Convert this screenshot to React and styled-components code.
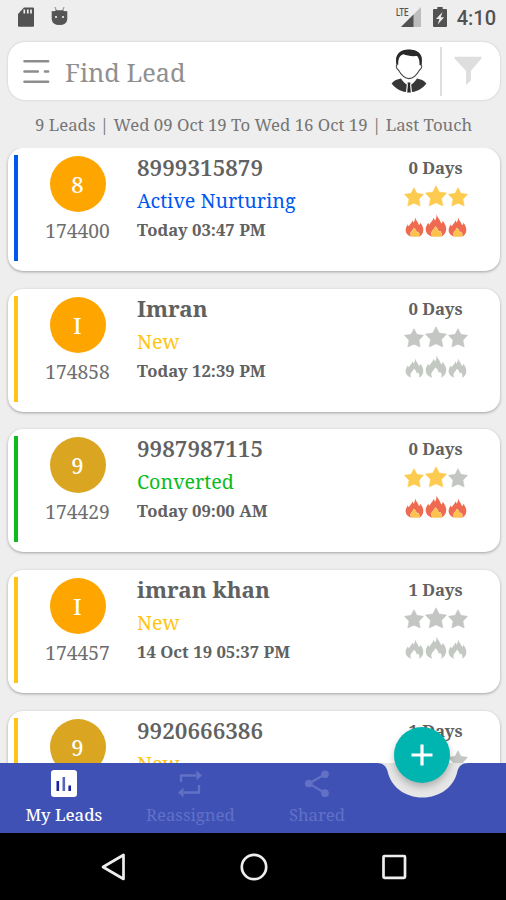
import React from "react";
import styled, { createGlobalStyle } from "styled-components";

const leads = [
  { initial: "8", id: "174400", name: "8999315879", status: "Active Nurturing", color: "#0057f0", time: "Today 03:47 PM", days: 0, stars: 3, flames: 3, avatar: "#ffa500" },
  { initial: "I", id: "174858", name: "Imran", status: "New", color: "#ffc419", time: "Today 12:39 PM", days: 0, stars: 0, flames: 0, avatar: "#ffa500" },
  { initial: "9", id: "174429", name: "9987987115", status: "Converted", color: "#0dbb1c", time: "Today 09:00 AM", days: 0, stars: 2, flames: 3, avatar: "#daa520" },
  { initial: "I", id: "174457", name: "imran khan", status: "New", color: "#ffc419", time: "14 Oct 19 05:37 PM", days: 1, stars: 0, flames: 0, avatar: "#ffa500" },
  { initial: "9", name: "9920666386", status: "New", color: "#ffc419", days: 1, stars: 0, flames: 0, avatar: "#daa520" },
];

const Star = ({ big, on }) => (
  <svg width={big ? 22 : 20} height={big ? 22 : 20} viewBox="0 0 22 22">
    <path
      d="M11 .8l3.200 6.200 7.300 1.100-5 5.300 1.300 7.500L11 17.800l-6.800 3.100 1.300-7.500-5-5.300L7.800 7z"
      fill={on ? "#fdcb50" : "#c3c6c3"}
      stroke={on ? "#fdcb50" : "#c3c6c3"}
      strokeWidth=".6"
      strokeLinejoin="round"
    />
  </svg>
);

const Flame = ({ big, on }) => (
  <svg width={big ? 22 : 19} height={big ? 23 : 20} viewBox="0 0 22 24" preserveAspectRatio="none">
    <path
      d="M11.500.3C12.500 4 15.300 6 16.200 10c.8-.6 1.400-1.700 1.500-3 2.300 2.900 3.700 6.200 3.500 9.300-.2 3.400-2 6.100-5.200 7.500 1.200-2.200 1-4.200-1-6.400-.3.600-.7 1-1.400 1.200-.1-2.400-1.300-4.300-3.400-5.800-.4 2.300-3 3.700-3.700 6-.5 1.700-.1 3.500 1 5C3.200 22.500.8 19.800.7 16c0-2.700 1.200-4.900 2.500-7 .3 1 .7 1.700 1.400 2.200C5.300 8.500 8 7.300 8.500 4.300c.8.700 1.300 1.600 1.500 2.700 1.200-1.800 1.700-4.200 1.500-6.700z"
      fill={on ? "#ee6a50" : "#c3c8c3"}
    />
    {on && (
      <path
        d="M10.200 12.800c2.100 1.500 3.300 3.400 3.400 5.800.7-.2 1.100-.6 1.400-1.200 2 2.200 2.200 4.200 1 6.400H7.500c-1.100-1.500-1.500-3.300-1-5 .7-2.300 3.300-3.700 3.700-6z"
        fill="#fcc250"
      />
    )}
  </svg>
);

const MenuIcon = () => (
  <svg width="28" height="25" viewBox="0 0 28 25" fill="none" stroke="#8d8d8d" strokeWidth="2.600" strokeLinecap="round">
    <path d="M2.500 2.200h23.600M2.500 12.500h13.300M23 12.500h3.100M2.500 22.800h23.600" />
  </svg>
);

const Person = () => (
  <svg width="36" height="44" viewBox="0 0 36 44">
    <path
      d="M5.600 12C5 5.500 10 1.200 18 1.200S31 5 30.400 12l-.4 4c1.400.6.700 3.500-1.400 5-2.600 4.500-6.200 8.600-10.600 8.600S10 25.500 7.400 21c-2.100-1.500-2.800-4.400-1.400-5z"
      fill="#fff"
      stroke="#444"
      strokeWidth="1.100"
    />
    <path d="M5.600 15.500C4.200 6 8 .6 18 .6c8 0 13.600 4 12.500 13.800l-.5 1.800-1.500-.2c.2-4-.4-6.600-2.400-9C21 7.500 15.500 6.800 12.500 5.300 8.500 6.500 7.200 9.500 7.200 15.700z" fill="#292929" />
    <path d="M10 29.500c2.200 3.500 4.300 5.200 5.800 6L15 43C9 42.200 4.200 39 .6 34.400c2.400-2.900 5.600-4.200 9.400-4.900zM26 29.500c-2.200 3.500-4.300 5.200-5.800 6L21 43c6-.8 10.800-4 14.400-8.600-2.400-2.900-5.600-4.200-9.400-4.900z" fill="#383838" />
    <path d="M16.500 33.500h3l-.4 2.500.7 7.500h-3.600l.7-7.500z" fill="#292929" />
  </svg>
);

const Funnel = () => (
  <svg width="28" height="30" viewBox="0 0 28 30">
    <path d="M.5.800h27v1.800L17 14.800v9.400L12 29V14.800L.500 2.600z" fill="#dedede" />
  </svg>
);

const StatusIcons = () => (
  <>
    <svg width="16" height="20" viewBox="0 0 16 20">
      <path d="M6 .5h9q1 0 1 1v17.200q0 1-1 1H1q-1 0-1-1V7z" fill="#525252" />
      <path d="M6.300 2.500v4M9.800 2.500v4M13 2.500v4" stroke="#eee" strokeWidth="1.700" />
    </svg>
    <svg width="17" height="20" viewBox="0 0 17 20">
      <path d="M4 0l1.500 4M13 0l-1.500 4" stroke="#9a9a9a" strokeWidth="1.200" />
      <path d="M.7 4q3 .5 4.500-.8h6.600Q13.300 4.500 16.300 4v8q-.5 6-7.800 6T.7 12z" fill="#555" />
      <circle cx="5" cy="10" r="1.100" fill="#eee" />
      <circle cx="12" cy="10" r="1.100" fill="#eee" />
    </svg>
  </>
);

const Signal = () => (
  <svg width="20" height="20" viewBox="0 0 20 20">
    <path d="M20 0v20H0z" fill="#bdbdbd" />
    <path d="M12.500 7.500V20H0z" fill="#525252" />
  </svg>
);

const Battery = () => (
  <svg width="14" height="20" viewBox="0 0 14 20">
    <path d="M4.300 0h5.400v2H13q1 0 1 1v16q0 1-1 1H1q-1 0-1-1V3q0-1 1-1h3.300z" fill="#525252" />
    <path d="M9.500 5L3 12h3.400L4.800 17.500 11 10.300H7.700z" fill="#eee" />
  </svg>
);

const ChartIcon = () => (
  <svg width="26" height="27" viewBox="0 0 26 27">
    <rect width="26" height="27" rx="3" fill="#fff" />
    <path d="M6.800 11v10" stroke="#1c1fa0" strokeWidth="2.600" />
    <path d="M12.800 7v14" stroke="#5a62bf" strokeWidth="2.600" />
    <path d="M18.700 15.500V21" stroke="#1c1fa0" strokeWidth="2.600" />
  </svg>
);

const RepeatIcon = () => (
  <svg width="26" height="27" viewBox="0 0 26 27">
    <path d="M4 12V5.500h15.500M22 15v7.500H6.500" fill="none" stroke="#6270c5" strokeWidth="2.300" />
    <path d="M19.500.5l5.500 5-5.500 5zM6.500 17.500l-5.500 5 5.500 5z" fill="#6270c5" />
  </svg>
);

const ShareIcon = () => (
  <svg width="26" height="27" viewBox="0 0 26 28" fill="#6270c5">
    <path d="M21.500 4.500L4.500 14l17 10" fill="none" stroke="#6270c5" strokeWidth="2.300" />
    <circle cx="21.300" cy="4.500" r="4" />
    <circle cx="4.500" cy="14" r="4" />
    <circle cx="21.300" cy="24" r="4" />
  </svg>
);

const App = () => {
  return (
    <Screen>
      <GlobalStyle />
      <StatusBar>
        <StatusIcons />
        <Lte>LTE</Lte>
        <Signal />
        <Battery />
        <Clock>4:10</Clock>
      </StatusBar>
      <SearchBar>
        <MenuIcon />
        <SearchText>Find Lead</SearchText>
        <Person />
        <Divider />
        <Funnel />
      </SearchBar>
      <Summary>9 Leads | Wed 09 Oct 19 To Wed 16 Oct 19 | Last Touch</Summary>
      <LeadList>
        {leads.map((lead) => (
          <Card key={lead.name}>
            <Stripe $color={lead.color} />
            <Badge>
              <Avatar $color={lead.avatar}>{lead.initial}</Avatar>
              {lead.id && <LeadId>{lead.id}</LeadId>}
            </Badge>
            <Details>
              <Name $digits={/^\d/.test(lead.name)}>{lead.name}</Name>
              <Status $color={lead.color}>{lead.status}</Status>
              {lead.time && <Time>{lead.time}</Time>}
            </Details>
            <Rating>
              <Days>{lead.days} Days</Days>
              <IconRow $height={26}>
                {[0, 1, 2].map((i) => (
                  <Star key={i} big={i === 1} on={i < lead.stars} />
                ))}
              </IconRow>
              <IconRow $height={30}>
                {[0, 1, 2].map((i) => (
                  <Flame key={i} big={i === 1} on={i < lead.flames} />
                ))}
              </IconRow>
            </Rating>
          </Card>
        ))}
      </LeadList>
      <BottomBar>
        <Tab $active>
          <ChartIcon />
          <TabLabel>My Leads</TabLabel>
        </Tab>
        <Tab>
          <RepeatIcon />
          <TabLabel>Reassigned</TabLabel>
        </Tab>
        <Tab>
          <ShareIcon />
          <TabLabel>Shared</TabLabel>
        </Tab>
        <Notch width="92" height="36" viewBox="0 0 92 36">
          <path d="M0 0C6 0 9 3 10.500 8C14 24 28 34.500 45.500 34.500S77 24 80.500 8C82 3 85 0 91 0z" fill="#e6e6e6" />
        </Notch>
        <AddButton>
          <svg width="22" height="22" viewBox="0 0 22 22">
            <path d="M11 .5v21M.5 11h21" stroke="#fff" strokeWidth="3.200" />
          </svg>
        </AddButton>
      </BottomBar>
      <SystemNav>
        <svg width="26" height="28" viewBox="0 0 26 28" fill="none" stroke="#eee" strokeWidth="2.700" strokeLinejoin="round">
          <path d="M22.500 2v24L2 14z" />
        </svg>
        <svg width="28" height="28" viewBox="0 0 28 28" fill="none" stroke="#eee" strokeWidth="2.700">
          <circle cx="14" cy="14" r="12.200" />
        </svg>
        <svg width="26" height="28" viewBox="0 0 26 28" fill="none" stroke="#eee" strokeWidth="2.700">
          <rect x="2.500" y="3" width="21.500" height="21.800" rx="1" />
        </svg>
      </SystemNav>
    </Screen>
  );
};

export default App;

const GlobalStyle = createGlobalStyle`
  * {
    box-sizing: border-box;
  }
  body {
    margin: 0;
    overflow: hidden;
  }
  svg {
    display: block;
    flex: none;
  }
`;

const Screen = styled.div`
  display: flex;
  flex-direction: column;
  width: 506px;
  height: 900px;
  overflow: hidden;
  background: #eeeeee;
  color: #616161;
  font-family: "Noto Serif", "DejaVu Serif", serif;
  white-space: nowrap;
`;

const StatusBar = styled.div`
  display: flex;
  align-items: flex-start;
  gap: 12px;
  height: 42px;
  padding: 7px 10px 0 18px;

  svg:nth-child(2) {
    margin-left: 5px;
  }
`;

const Lte = styled.span`
  z-index: 1;
  margin: 0 -21px 0 auto;
  font: 500 11px/11px Roboto, sans-serif;
  color: #525252;
  transform: scaleX(0.72);
  transform-origin: 80% 50%;
`;

const Clock = styled.span`
  margin-left: -2px;
  font: 500 20px/22px Roboto, sans-serif;
  color: #525252;
`;

const SearchBar = styled.div`
  display: flex;
  align-items: center;
  height: 58px;
  margin: 0 6px 0 8px;
  padding: 0 18px 0 14px;
  border-radius: 17px;
  background: #fff;
  box-shadow: 0 0 2px rgba(0, 0, 0, 0.22);
`;

const SearchText = styled.span`
  flex: 1;
  margin-left: 15px;
  padding-top: 1px;
  font-size: 25.3px;
  color: #909090;
`;

const Divider = styled.div`
  width: 2px;
  height: 49px;
  margin: 0 12px 0 13px;
  background: #dedede;
`;

const Summary = styled.div`
  height: 48px;
  padding-left: 35px;
  font-size: 16.8px;
  line-height: 50px;
  color: #757575;
`;

const LeadList = styled.div`
  display: flex;
  flex-direction: column;
  gap: 17.7px;
  height: 615px;
  padding: 0 6px 0 8px;
  overflow: hidden;
`;

const Card = styled.div`
  display: flex;
  flex: none;
  height: 123px;
  padding: 7px 0 0 6px;
  border-radius: 15px;
  background: #fff;
  box-shadow: 0 1px 3px rgba(0, 0, 0, 0.32);
`;

const Stripe = styled.div`
  width: 4px;
  height: 106px;
  background: ${({ $color }) => $color};
`;

const Badge = styled.div`
  display: flex;
  flex-direction: column;
  align-items: center;
  width: 119px;
  padding-top: 1px;
`;

const Avatar = styled.div`
  width: 56px;
  height: 56px;
  border-radius: 50%;
  background: ${({ $color }) => $color};
  color: #fff;
  font-size: 22px;
  font-weight: 500;
  line-height: 57px;
  text-align: center;
`;

const LeadId = styled.div`
  margin-top: 6px;
  font-size: 19.3px;
  line-height: 25px;
  color: #6e6e6e;
`;

const Details = styled.div`
  flex: 1;
`;

const Name = styled.div`
  font-size: 22.4px;
  font-weight: ${({ $digits }) => ($digits ? 600 : 700)};
  line-height: 26px;
`;

const Status = styled.div`
  margin-top: 6px;
  font-size: 19.7px;
  line-height: 28px;
  color: ${({ $color }) => $color};
`;

const Time = styled.div`
  margin-top: 3px;
  font-size: 16.7px;
  font-weight: 700;
  line-height: 24px;
`;

const Rating = styled.div`
  display: flex;
  flex-direction: column;
  align-items: center;
  width: 129px;
`;

const Days = styled.div`
  font-size: 16.8px;
  font-weight: 700;
  line-height: 26px;
`;

const IconRow = styled.div`
  display: flex;
  align-items: flex-end;
  justify-content: center;
  gap: 1px;
  width: 64px;
  height: ${({ $height }) => $height}px;
`;

const BottomBar = styled.div`
  position: relative;
  display: flex;
  height: 70px;
  padding-left: 0.5px;
  background: #3f51b5;
`;

const Tab = styled.div`
  display: flex;
  flex-direction: column;
  align-items: center;
  gap: 6px;
  width: 126.6px;
  padding-top: 7px;
  color: ${({ $active }) => ($active ? "#fff" : "#6270c5")};
  font-weight: ${({ $active }) => ($active ? 500 : 400)};
`;

const TabLabel = styled.span`
  font-size: 16.7px;
  line-height: 24px;
`;

const Notch = styled.svg`
  position: absolute;
  top: 0;
  left: 377px;
`;

const AddButton = styled.div`
  position: absolute;
  top: -36px;
  left: 394px;
  display: flex;
  align-items: center;
  justify-content: center;
  width: 56px;
  height: 56px;
  border-radius: 50%;
  background: #00b5b0;
  box-shadow: 0 4px 7px rgba(0, 0, 0, 0.24);
`;

const SystemNav = styled.div`
  display: flex;
  align-items: center;
  justify-content: space-between;
  height: 67px;
  padding: 0 99px 0 101px;
  background: #000;
`;
